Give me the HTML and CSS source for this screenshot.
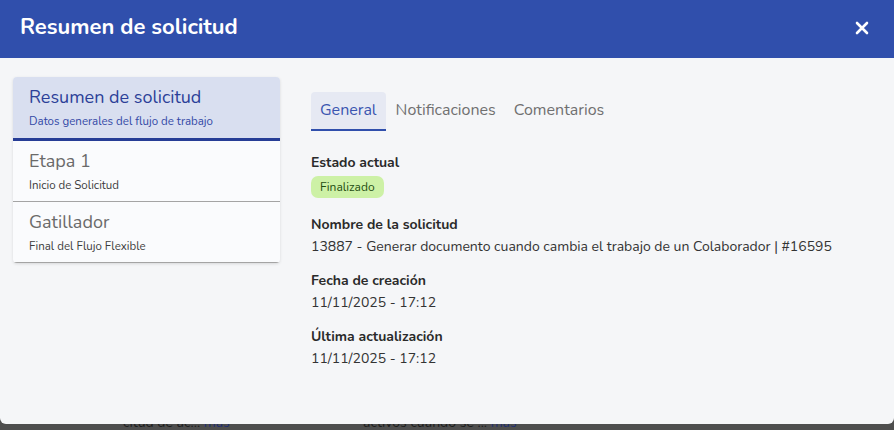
FILE: index.html
```html
<!DOCTYPE html>
<html lang="es">
<head>
    <meta charset="UTF-8" />
    <meta name="viewport" content="width=device-width, initial-scale=1.0" />
    <title>Resumen de solicitud</title>
    <link rel="stylesheet" href="styles.css">
</head>
<body>

    <div class="backdrop">
        <span class="peek peek-a">citud de ac... <b>más</b></span>
        <span class="peek peek-b">activos cuando se ... <b>más</b></span>
    </div>

    <div class="modal">
        <div class="modal-header">
            <h1>Resumen de solicitud</h1>
            <button class="close" aria-label="Cerrar">
                <svg width="14" height="14" viewBox="0 0 14 14">
                    <path d="M2 2 L12 12 M12 2 L2 12" stroke="#fff" stroke-width="2.6" stroke-linecap="round" />
                </svg>
            </button>
        </div>

        <div class="modal-body">
            <div class="steps">
                <div class="step active">
                    <div class="step-title">Resumen de solicitud</div>
                    <div class="step-sub">Datos generales del flujo de trabajo</div>
                </div>
                <div class="step">
                    <div class="step-title">Etapa 1</div>
                    <div class="step-sub">Inicio de Solicitud</div>
                </div>
                <div class="step">
                    <div class="step-title">Gatillador</div>
                    <div class="step-sub">Final del Flujo Flexible</div>
                </div>
            </div>

            <div class="details">
                <div class="tabs">
                    <div class="tab selected">General</div>
                    <div class="tab">Notificaciones</div>
                    <div class="tab">Comentarios</div>
                </div>

                <div class="field status">
                    <div class="field-label">Estado actual</div>
                    <span class="badge">Finalizado</span>
                </div>
                <div class="field">
                    <div class="field-label">Nombre de la solicitud</div>
                    <div class="field-value">13887 - Generar documento cuando cambia el trabajo de un Colaborador | #16595</div>
                </div>
                <div class="field">
                    <div class="field-label">Fecha de creación</div>
                    <div class="field-value">11/11/2025 - 17:12</div>
                </div>
                <div class="field">
                    <div class="field-label">Última actualización</div>
                    <div class="field-value">11/11/2025 - 17:12</div>
                </div>
            </div>
        </div>
    </div>

</body>
</html>
```

FILE: styles.css
```css
body {
    margin: 0;
    font-family: Nunito, Lato, "Noto Sans", sans-serif;
    background-color: #4e4e4e;
    height: 430px;
    overflow: hidden;
    position: relative;
}

.backdrop {
    position: absolute;
    left: 0;
    right: 0;
    bottom: 0;
    height: 430px;
    color: #1d1d1d;
    font-size: 14px;
}

.peek {
    position: absolute;
    top: 413px;
}

    .peek b {
        font-weight: normal;
        color: #1f2f70;
    }

.peek-a {
    left: 123px;
}

.peek-b {
    left: 363px;
}

.modal {
    position: relative;
    width: 894px;
    height: 424px;
    background: #f5f6f8;
    border-radius: 0 0 6px 6px;
    overflow: hidden;
}

.modal-header {
    height: 58px;
    background-color: #304fac;
    display: flex;
    align-items: center;
    justify-content: space-between;
    padding: 0 25px 0 20px;
}

    .modal-header h1 {
        margin: 0;
        color: white;
        font-size: 22px;
        font-weight: 700;
        padding-bottom: 4px;
    }

.close {
    background: none;
    border: none;
    padding: 0 0 2px 0;
    display: flex;
    cursor: pointer;
}

.modal-body {
    display: flex;
    align-items: flex-start;
    padding: 19px 13px 0 13px;
}

.steps {
    width: 267px;
    background: #fafbfd;
    border-radius: 4px;
    box-shadow: 0 1px 3px rgba(0,0,0,0.12);
    overflow: hidden;
    flex-shrink: 0;
}

.step {
    padding: 8px 16px 0 16px;
    height: 52px;
    border-bottom: 1px solid #a4a4a4;
}

    .step.active {
        background: #d9dff0;
        height: 53px;
        border-bottom: 3px solid #263d96;
    }

.step-title {
    font-size: 18px;
    color: #6a6a6a;
    line-height: 24px;
}

.step-sub {
    font-size: 11.5px;
    color: #3c3c3c;
    margin-top: 4px;
}

.step.active .step-title {
    color: #2c3f98;
}

.step.active .step-sub {
    color: #3248a6;
}

.details {
    padding: 15px 0 0 31px;
}

.tabs {
    display: flex;
    margin-bottom: 22px;
}

.tab {
    padding: 0 9px;
    height: 36px;
    line-height: 36px;
    font-size: 16px;
    color: #707070;
}

    .tab.selected {
        background: #e6e9f3;
        color: #3a55b0;
        border-bottom: 2px solid #304fac;
        border-radius: 4px 4px 0 0;
        height: 37px;
        margin-right: 1px;
    }

.field {
    margin-bottom: 14px;
}

    .field.status {
        margin-bottom: 17px;
    }

.field-label {
    font-size: 14px;
    font-weight: 700;
    color: #2a2a2a;
    line-height: 20px;
    margin-bottom: 2px;
}

.field-value {
    font-size: 14px;
    color: #333;
    line-height: 20px;
}

.badge {
    display: inline-block;
    background: #cdf1a6;
    color: #1f4d12;
    font-size: 12px;
    padding: 3px 9px;
    border-radius: 7px;
    line-height: 16px;
}
```
